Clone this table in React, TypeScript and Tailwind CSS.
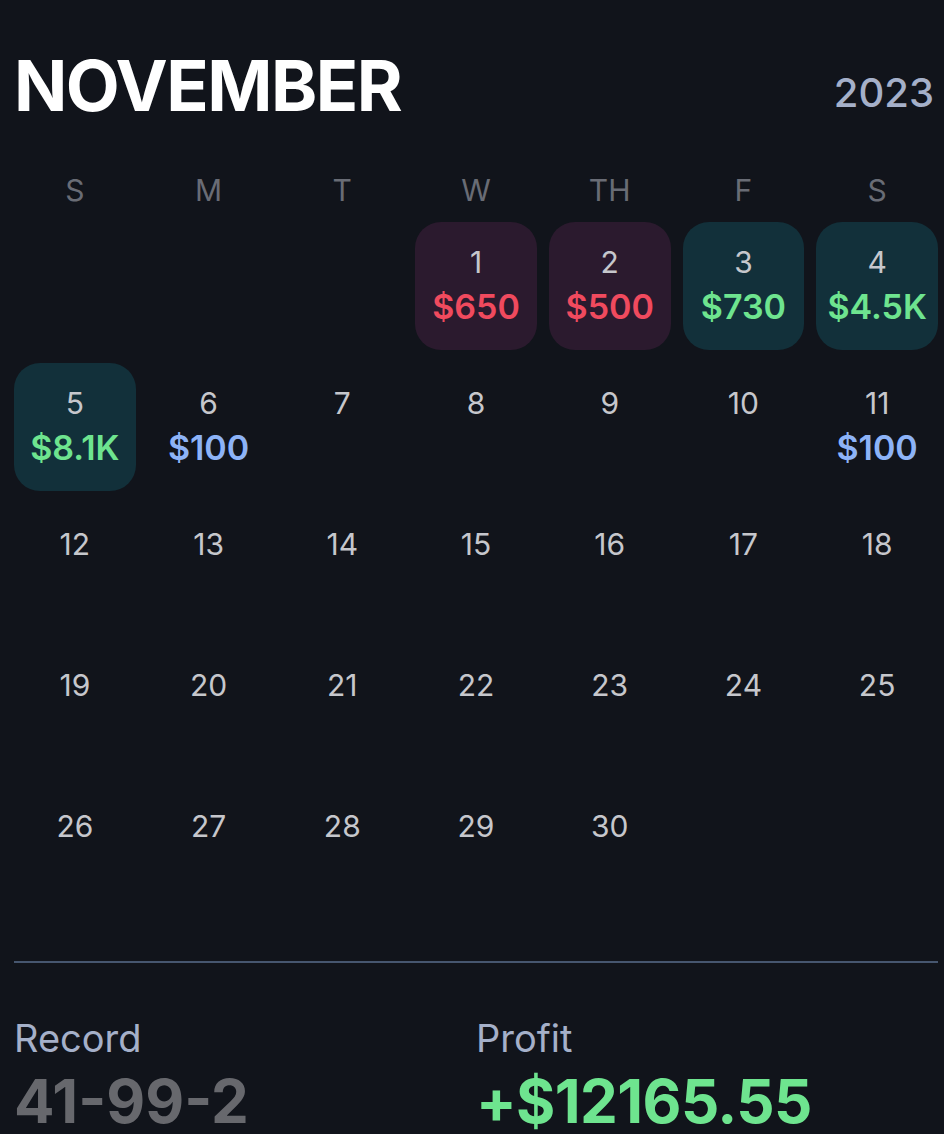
import React from "react";

type Day = { n: number; amount?: string; tone?: "loss" | "win" | "even" };

const weekdays = ["S", "M", "T", "W", "TH", "F", "S"];

const days: (Day | null)[] = [
  null, null, null,
  { n: 1, amount: "$650", tone: "loss" },
  { n: 2, amount: "$500", tone: "loss" },
  { n: 3, amount: "$730", tone: "win" },
  { n: 4, amount: "$4.5K", tone: "win" },
  { n: 5, amount: "$8.1K", tone: "win" },
  { n: 6, amount: "$100", tone: "even" },
  { n: 7 }, { n: 8 }, { n: 9 }, { n: 10 },
  { n: 11, amount: "$100", tone: "even" },
  ...Array.from({ length: 19 }, (_, i) => ({ n: i + 12 })),
];

function DayCell({ day }: { day: Day | null }) {
  if (!day) return <div className="h-[128px]" />;
  const bg =
    day.tone === "loss" ? "bg-[#2b1a2e]" : day.tone === "win" ? "bg-[#12303a]" : "";
  const amountColor =
    day.tone === "loss" ? "text-[#f04a5e]" : day.tone === "win" ? "text-[#6ee48f]" : "text-[#8db3f7]";
  return (
    <div className={`flex h-[128px] flex-col items-center rounded-[26px] pt-[25px] ${bg}`}>
      <span className="text-[30px] leading-[30px] text-[#c6c7cc]">{day.n}</span>
      {day.amount && (
        <span className={`mt-[12px] text-[34px] font-semibold leading-[36px] ${amountColor}`}>{day.amount}</span>
      )}
    </div>
  );
}

export default function App() {
  return (
    <div className="min-h-[1134px] bg-[#11141b] pl-[14px] pt-[50px] font-['Inter',sans-serif]">
      <div className="flex h-[72px] w-[920px] items-center justify-between">
        <h1 className="text-[70px] font-bold leading-[72px] tracking-[-1.5px] text-white">NOVEMBER</h1>
        <span className="pt-[14px] text-[40px] font-medium text-[#a5b0c9]">2023</span>
      </div>

      <div className="mt-[48px] grid w-[924px] grid-cols-7 gap-x-[12px]">
        {weekdays.map((w, i) => (
          <div key={i} className="text-center text-[30px] leading-[40px] text-[#696c75]">{w}</div>
        ))}
      </div>

      <div className="mt-[12px] grid w-[924px] grid-cols-7 gap-x-[12px] gap-y-[13px]">
        {days.map((d, i) => (
          <DayCell key={i} day={d} />
        ))}
      </div>

      <div className="mt-[47px] h-[2px] w-[924px] bg-[#46566f]" />

      <div className="mt-[52px] grid w-[924px] grid-cols-2">
        <div>
          <div className="text-[38px] leading-[46px] text-[#a5b0c9]">Record</div>
          <div className="mt-[12px] text-[60px] font-bold leading-[56px] text-[#67686d]">41-99-2</div>
        </div>
        <div>
          <div className="text-[38px] leading-[46px] text-[#a5b0c9]">Profit</div>
          <div className="mt-[12px] text-[60px] font-bold leading-[56px] tracking-[-0.6px] text-[#6ee48f]">+$12165.55</div>
        </div>
      </div>
    </div>
  );
}
